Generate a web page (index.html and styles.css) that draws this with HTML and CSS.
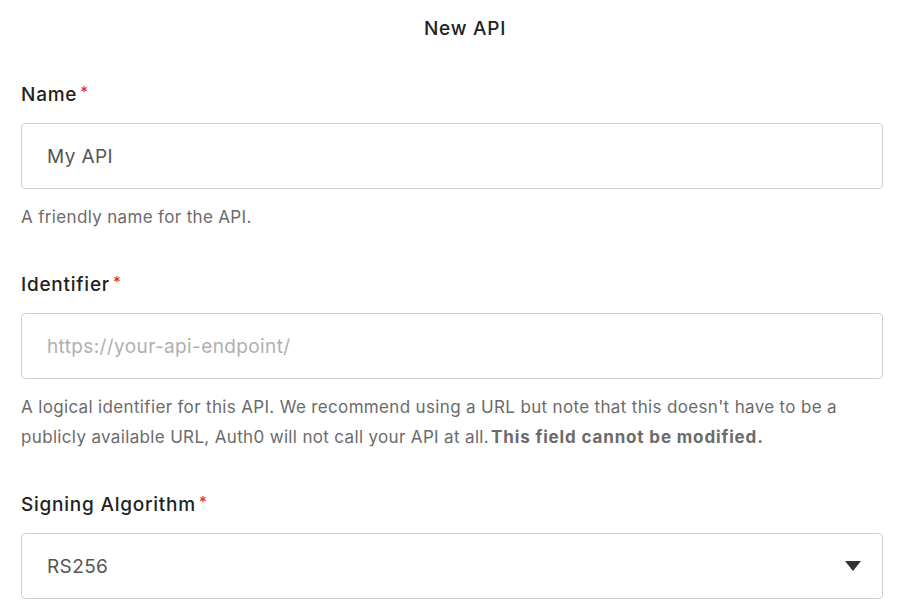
FILE: index.html
```html
<!DOCTYPE html>
<html lang="en">
<head>
<meta charset="utf-8">
<title>New API</title>
<link rel="stylesheet" href="styles.css">
</head>
<body>
<div class="page">
  <h1 class="title">New API</h1>
  <form class="form">
    <div class="field">
      <label class="label">Name<span class="req">*</span></label>
      <div class="input">My API</div>
      <p class="help">A friendly name for the API.</p>
    </div>
    <div class="field">
      <label class="label">Identifier<span class="req">*</span></label>
      <div class="input placeholder">https://your-api-endpoint/</div>
      <p class="help">A logical identifier for this API. We recommend using a URL but note that this doesn't have to be a publicly available URL, Auth0 will not call your API at all.<strong>This field cannot be modified.</strong></p>
    </div>
    <div class="field">
      <label class="label">Signing Algorithm<span class="req">*</span></label>
      <div class="input select"><span>RS256</span><span class="caret"></span></div>
    </div>
  </form>
</div>
</body>
</html>
```
FILE: styles.css
```css
html, body {
  margin: 0;
  padding: 0;
  background: #fff;
}
body {
  font-family: Inter, "Noto Sans", sans-serif;
  color: #222;
}
.page {
  padding: 0 23px 0 21px;
}
.title {
  margin: 0;
  height: 57px;
  line-height: 57px;
  text-align: center;
  font-size: 19px;
  letter-spacing: 0.04em;
  font-weight: 500;
  color: #222;
  padding-left: 26px;
}
.form {
  display: flex;
  flex-direction: column;
  gap: 41px;
  margin-top: 26px;
}
.field {
  display: flex;
  flex-direction: column;
}
.label {
  font-size: 19px;
  letter-spacing: 0.04em;
  line-height: 24px;
  font-weight: 500;
  color: #222;
  margin-bottom: 16px;
}
.req {
  color: #e0332f;
  margin-left: 3px;
  font-size: 15px;
  line-height: 0;
  vertical-align: 4px;
}
.input {
  box-sizing: border-box;
  height: 66px;
  border: 1px solid #cfcfcf;
  border-radius: 4px;
  padding: 0 25px;
  display: flex;
  align-items: center;
  font-size: 19px;
  letter-spacing: 0.02em;
  color: #555;
}
.placeholder {
  color: #b0b0b0;
}
.select {
  justify-content: space-between;
  padding-right: 21px;
}
.caret {
  width: 0;
  height: 0;
  border-left: 8px solid transparent;
  border-right: 8px solid transparent;
  border-top: 10px solid #333;
}
.help {
  margin: 13px 0 0;
  font-size: 17px;
  letter-spacing: 0.02em;
  line-height: 30px;
  color: #6b6b6b;
}
.help strong {
  font-weight: 700;
  letter-spacing: 0.05em;
  color: #6b6b6b;
  margin-left: 2px;
}
```
